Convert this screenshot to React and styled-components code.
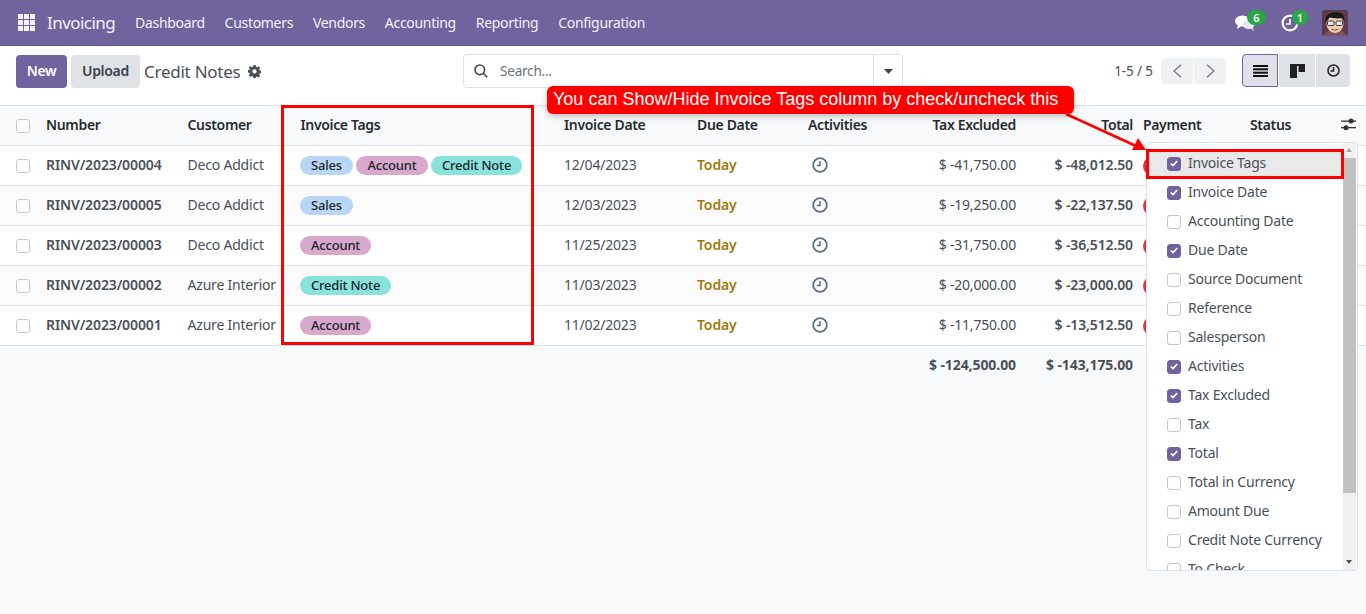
import React from "react";
import styled, { createGlobalStyle } from "styled-components";

const Global = createGlobalStyle`
  html, body { margin: 0; padding: 0; }
  body { font-family: "Noto Sans", "Open Sans", sans-serif; font-size: 14px; background: #f9fafb; color: #4a5058; }
  * { box-sizing: border-box; }
`;

const Page = styled.div`
  position: relative;
  width: 1366px;
  height: 614px;
  overflow: hidden;
  background: #f8f9fb;
`;

const Nav = styled.header`
  height: 46px;
  background: #71639e;
  border-bottom: 1px solid #5f5488;
  display: flex;
  align-items: center;
  padding: 0 18px;
  color: #f3f1f7;
`;
const Brand = styled.span`
  font-size: 17px;
  margin: 0 20px 0 12px;
  width: 68px;
  letter-spacing: -0.55px;
  white-space: nowrap;
`;
const Menu = styled.nav`
  display: flex;
  gap: 19.8px;
  font-size: 14px;
  letter-spacing: -0.3px;
`;
const NavRight = styled.div`
  margin-left: auto;
  display: flex;
  align-items: center;
`;
const Systray = styled.span`
  position: relative;
  display: flex;
  width: ${p => p.$w}px;
  height: 26px;
  align-items: center;
`;
const Badge = styled.span`
  position: absolute;
  left: ${p => p.$left}px;
  top: 0;
  width: ${p => p.$width}px;
  height: 15px;
  border-radius: 8px;
  background: #28a745;
  color: #fff;
  font-size: 11px;
  font-weight: 600;
  line-height: 15px;
  text-align: center;
`;

const Panel = styled.section`
  height: 59px;
  padding: 8px 16px 0;
  display: grid;
  grid-template-columns: 1fr 440px 1fr;
  align-items: start;
  background: #fff;
`;
const PanelLeft = styled.div`
  display: flex;
  align-items: center;
  margin-top: 1px;
`;
const Btn = styled.button`
  height: 33px;
  width: ${p => p.$w}px;
  margin-right: 4px;
  border: 0;
  border-radius: 4px;
  padding: 0 0 2px;
  font: 600 14px "Noto Sans", sans-serif;
  letter-spacing: -0.3px;
  background: ${p => (p.$primary ? "#71639e" : "#e0e2e6")};
  color: ${p => (p.$primary ? "#fff" : "#374151")};
`;
const Title = styled.span`
  font-size: 17px;
  color: #4a5058;
  margin-right: 8px;
  letter-spacing: -0.25px;
`;
const Search = styled.div`
  height: 34px;
  border: 1px solid #dee2e6;
  border-radius: 4px;
  display: flex;
  align-items: center;
  background: #fff;
`;
const SearchInput = styled.div`
  flex: 1;
  display: flex;
  align-items: center;
  gap: 12px;
  padding-left: 10px;
  font-size: 13.5px;
  color: #6b7280;
  letter-spacing: -0.2px;
`;
const SearchCaret = styled.div`
  width: 29px;
  height: 100%;
  border-left: 1px solid #dee2e6;
  display: flex;
  align-items: center;
  justify-content: center;
`;
const PanelRight = styled.div`
  display: flex;
  justify-content: flex-end;
  align-items: center;
  height: 33px;
`;
const PagerText = styled.span`
  font-size: 13.5px;
  margin-right: 8px;
  letter-spacing: -0.1px;
`;
const PagerGroup = styled.div`
  display: flex;
  gap: 1px;
  margin-right: 16px;
`;
const PagerBtn = styled.span`
  width: 32px;
  height: 26px;
  background: #f0f1f3;
  display: flex;
  align-items: center;
  justify-content: center;
  border-radius: ${p => (p.$first ? "4px 0 0 4px" : "0 4px 4px 0")};
`;
const ViewGroup = styled.div`
  display: flex;
  gap: 1px;
`;
const ViewBtn = styled.span`
  width: ${p => p.$w}px;
  height: 33px;
  display: flex;
  align-items: center;
  justify-content: center;
  background: ${p => (p.$active ? "#e1dfeb" : "#dee2e6")};
  border: ${p => (p.$active ? "1px solid #71639e" : "0")};
  border-radius: ${p => p.$radius};
`;

const Table = styled.table`
  width: 1366px;
  table-layout: fixed;
  border-collapse: collapse;
  font-size: 14px;
  letter-spacing: -0.2px;
`;
const Th = styled.th`
  height: 40px;
  padding: 0 ${p => p.$pr ?? 8}px ${p => p.$pb ?? 2}px ${p => p.$pl ?? 8}px;
  background: #f8f9fa;
  color: #262b31;
  font-weight: 600;
  letter-spacing: -0.34px;
  text-align: ${p => p.$align || "left"};
  border-top: 1px solid #dee2e6;
  border-bottom: 1px solid #dee2e6;
  white-space: nowrap;
`;
const Tr = styled.tr`
  background: ${p => (p.$odd ? "#fbfbfb" : "#fff")};
`;
const Td = styled.td`
  height: 40px;
  padding: 0 ${p => p.$pr ?? 8}px ${p => p.$pb ?? 2}px ${p => p.$pl ?? 8}px;
  border-bottom: 1px solid #dee2e6;
  text-align: ${p => p.$align || "left"};
  white-space: nowrap;
  overflow: hidden;
  font-weight: ${p => (p.$bold ? 600 : 400)};
  letter-spacing: ${p => (p.$bold ? "-0.12px" : "inherit")};
  color: ${p => p.$color || "#4a5058"};
`;
const FootTd = styled.td`
  height: 40px;
  padding: 0 ${p => p.$pr ?? 8}px 2px 8px;
  text-align: right;
  font-weight: 700;
  letter-spacing: -0.08px;
  color: #4a5058;
  white-space: nowrap;
`;
const Check = styled.span`
  display: flex;
  align-items: center;
  justify-content: center;
  width: 14px;
  height: 14px;
  border-radius: 3px;
  background: ${p => (p.$on ? "#71639e" : "#fff")};
  border: 1px solid ${p => (p.$on ? "#71639e" : "#c4c7cc")};
  flex: none;
`;
const Tags = styled.div`
  display: flex;
  gap: 3.5px;
`;
const Tag = styled.span`
  height: 19px;
  line-height: 19px;
  padding: 0 11px;
  border-radius: 10px;
  font-size: 13px;
  font-weight: 500;
  letter-spacing: -0.2px;
  color: #20262e;
  background: ${p => p.$bg};
`;
const PayDot = styled.span`
  display: block;
  width: 60px;
  height: 20px;
  border-radius: 10px;
  background: #dc3545;
`;

const Dropdown = styled.div`
  position: absolute;
  left: 1146px;
  top: 142px;
  width: 212px;
  height: 429px;
  background: #fff;
  border: 1px solid #dee2e6;
  border-radius: 4px;
  overflow: hidden;
  padding-top: 6px;
`;
const Item = styled.div`
  height: 29px;
  width: 196px;
  display: flex;
  align-items: center;
  gap: 7px;
  padding-left: 20px;
  font-size: 14px;
  letter-spacing: -0.22px;
  color: #4a5058;
  background: ${p => (p.$hover ? "#e9e9e9" : "transparent")};
`;
const ItemLabel = styled.span`
  margin-bottom: 2px;
`;
const Scrollbar = styled.div`
  position: absolute;
  right: 1px;
  top: 0;
  bottom: 0;
  width: 13px;
  background: #f1f1f1;
`;
const Thumb = styled.div`
  position: absolute;
  top: 15px;
  left: 0;
  width: 13px;
  height: 335px;
  background: #c1c1c1;
`;
const ScrollArrow = styled.span`
  position: absolute;
  ${p => (p.$down ? "bottom: 6px" : "top: 5px")};
  left: 3px;
  width: 0;
  height: 0;
  border-left: 3.5px solid transparent;
  border-right: 3.5px solid transparent;
  ${p => (p.$down ? "border-top: 4px solid #505050" : "border-bottom: 4px solid #a3a3a3")};
`;
const RedBox = styled.div`
  position: absolute;
  left: ${p => p.$x}px;
  top: ${p => p.$y}px;
  width: ${p => p.$w}px;
  height: ${p => p.$h}px;
  border: 3px solid #ff0000;
  pointer-events: none;
`;
const Callout = styled.div`
  position: absolute;
  left: 547px;
  top: 86px;
  width: 527px;
  height: 28px;
  padding-left: 6px;
  background: #ff0000;
  border-radius: 6px;
  box-shadow: 0 2px 6px rgba(0, 0, 0, 0.25);
  color: #fff;
  font: 18px/27px "Liberation Sans", Arial, sans-serif;
  white-space: nowrap;
`;
const ArrowSvg = styled.svg`
  position: absolute;
  left: 1060px;
  top: 108px;
`;
const OptionsIcon = styled.svg`
  position: absolute;
  left: 1341px;
  top: 118px;
`;
const ActivitySvg = styled.svg`
  display: block;
`;

const Grid = () => (
  <svg width="17" height="17" viewBox="0 0 17 17" fill="#f4f2f8">
    {[0, 6, 12].flatMap(x => [0, 6, 12].map(y => <rect key={x + "-" + y} x={x} y={y} width="5" height="5" />))}
  </svg>
);
const Chat = () => (
  <svg width="20" height="18" viewBox="0 0 20 18" fill="#fff">
    <ellipse cx="7.5" cy="7" rx="7.5" ry="5.5" />
    <path d="M3 10 L2 15 L8 11z" />
    <ellipse cx="13.5" cy="10.5" rx="6" ry="4.5" fill="#e9e6f2" />
    <path d="M14 13 L19 17 L17 12z" fill="#e9e6f2" />
  </svg>
);
const NavClock = () => (
  <svg width="18" height="18" viewBox="0 0 18 18" fill="none" stroke="#fff" strokeWidth="2.2">
    <circle cx="9" cy="9" r="7.4" />
    <path d="M9 5v5H5" strokeWidth="1.6" />
  </svg>
);
const Avatar = () => (
  <svg width="26" height="26" viewBox="0 0 26 26">
    <rect width="26" height="26" rx="3" fill="#5a3a4c" />
    <path d="M2 26c1-5 5-6 11-6s10 1 11 6z" fill="#7d5060" />
    <ellipse cx="13" cy="14" rx="8.5" ry="9" fill="#f1cdb5" />
    <path d="M3.500 12C2 5 9 1.500 14 2c5.500 0 9 3 8.500 9.500l-2-3.500C15 9 10 8 7.500 7.500 6.500 9 5.500 11 3.500 12z" fill="#1d1a1c" />
    <rect x="5.500" y="11" width="6.500" height="4.500" rx="1" fill="#e8e6e0" stroke="#3a3a3a" />
    <rect x="14" y="11" width="6.500" height="4.500" rx="1" fill="#e8e6e0" stroke="#3a3a3a" />
    <path d="M9.500 19c2.500 1.500 5 1.500 7 0" stroke="#8a4a3c" fill="none" />
  </svg>
);
const Gear = () => (
  <svg width="13" height="13" viewBox="0 0 13 13" fill="#4a5058">
    <path fillRule="evenodd" d="M5.3 0h2.4l.3 1.8 1 .4L10.500 1.200l1.700 1.700-1 1.500.4 1 1.900.3v2.400l-1.900.3-.4 1 1 1.500-1.700 1.700-1.500-1-1 .4-.3 1.900H5.300L5 11.400l-1-.4-1.500 1L.8 10.300l1-1.500-.4-1L0 7.500V5.100l1.400-.3.4-1-1-1.900L2.500 1.200 4 2.200l1-.4zM6.500 4.300a2.100 2.100 0 1 0 0 4.300 2.100 2.100 0 0 0 0-4.300z" />
  </svg>
);
const Magnifier = () => (
  <svg width="14" height="14" viewBox="0 0 14 14" fill="none" stroke="#3f4650" strokeWidth="1.6">
    <circle cx="5.8" cy="5.800" r="4.800" />
    <path d="M9.300 9.300 13.300 13.300" />
  </svg>
);
const Caret = () => (
  <svg width="9" height="5" viewBox="0 0 9 5" fill="#3f4650"><path d="M0 0h9L4.500 5z" /></svg>
);
const Chevron = ({ right }) => (
  <svg width="9" height="14" viewBox="0 0 9 14" fill="none" stroke="#6b7280" strokeWidth="1.200">
    <path d={right ? "M1 .7 8 7 1 13.300" : "M8 .7 1 7 8 13.300"} />
  </svg>
);
const ListIcon = () => (
  <svg width="15" height="12" viewBox="0 0 15 12" fill="#111">
    <rect y="0" width="15" height="2" /><rect y="3.300" width="15" height="2" /><rect y="6.700" width="15" height="2" /><rect y="10" width="15" height="2" />
  </svg>
);
const KanbanIcon = () => (
  <svg width="15" height="14" viewBox="0 0 15 14" fill="#222">
    <rect width="15" height="2" /><rect y="2" width="7" height="12" /><rect x="8.500" y="2" width="6.500" height="6" />
  </svg>
);
const SmallClock = () => (
  <svg width="13" height="13" viewBox="0 0 13 13" fill="none" stroke="#222" strokeWidth="1.500">
    <circle cx="6.500" cy="6.500" r="5.500" /><path d="M6.500 3v4H3.500" />
  </svg>
);
const ActivityClock = () => (
  <ActivitySvg width="16" height="16" viewBox="0 0 16 16" fill="none" stroke="#5f6e80" strokeWidth="1.800">
    <circle cx="8" cy="8" r="6.800" /><path d="M8 4v4.500H4.800" strokeWidth="1.500" />
  </ActivitySvg>
);
const Tick = () => (
  <svg width="8" height="7" viewBox="0 0 8 7" fill="none" stroke="#fff" strokeWidth="1.700"><path d="M.8 3.500 3 5.600 7.200 1" /></svg>
);

const tagColors = { Sales: "#bad6f7", Account: "#d9a9cd", "Credit Note": "#8ae3da" };
const rows = [
  ["RINV/2023/00004", "Deco Addict", ["Sales", "Account", "Credit Note"], "12/04/2023", "$ -41,750.00", "$ -48,012.50"],
  ["RINV/2023/00005", "Deco Addict", ["Sales"], "12/03/2023", "$ -19,250.00", "$ -22,137.50"],
  ["RINV/2023/00003", "Deco Addict", ["Account"], "11/25/2023", "$ -31,750.00", "$ -36,512.50"],
  ["RINV/2023/00002", "Azure Interior", ["Credit Note"], "11/03/2023", "$ -20,000.00", "$ -23,000.00"],
  ["RINV/2023/00001", "Azure Interior", ["Account"], "11/02/2023", "$ -11,750.00", "$ -13,512.50"],
];
const options = [
  ["Invoice Tags", true], ["Invoice Date", true], ["Accounting Date", false], ["Due Date", true],
  ["Source Document", false], ["Reference", false], ["Salesperson", false], ["Activities", true],
  ["Tax Excluded", true], ["Tax", false], ["Total", true], ["Total in Currency", false],
  ["Amount Due", false], ["Credit Note Currency", false], ["To Check", false],
];
const widths = [38, 141, 113, 264, 133, 111, 105, 119, 111, 107, 90, 34];

export default function App() {
  return (
    <Page>
      <Global />
      <Nav>
        <Grid />
        <Brand>Invoicing</Brand>
        <Menu>
          {["Dashboard", "Customers", "Vendors", "Accounting", "Reporting", "Configuration"].map(m => <span key={m}>{m}</span>)}
        </Menu>
        <NavRight>
          <Systray $w={46}><Chat /><Badge $left={12} $width={19}>6</Badge></Systray>
          <Systray $w={41}><NavClock /><Badge $left={11} $width={16}>1</Badge></Systray>
          <Avatar />
        </NavRight>
      </Nav>
      <Panel>
        <PanelLeft>
          <Btn $primary $w={51}>New</Btn>
          <Btn $w={69}>Upload</Btn>
          <Title>Credit Notes</Title>
          <Gear />
        </PanelLeft>
        <Search>
          <SearchInput><Magnifier />Search...</SearchInput>
          <SearchCaret><Caret /></SearchCaret>
        </Search>
        <PanelRight>
          <PagerText>1-5 / 5</PagerText>
          <PagerGroup>
            <PagerBtn $first><Chevron /></PagerBtn>
            <PagerBtn><Chevron right /></PagerBtn>
          </PagerGroup>
          <ViewGroup>
            <ViewBtn $active $w={36} $radius="4px 0 0 4px"><ListIcon /></ViewBtn>
            <ViewBtn $w={36} $radius="0"><KanbanIcon /></ViewBtn>
            <ViewBtn $w={34} $radius="0 4px 4px 0"><SmallClock /></ViewBtn>
          </ViewGroup>
        </PanelRight>
      </Panel>
      <Table>
        <colgroup>{widths.map((w, i) => <col key={i} style={{ width: w }} />)}</colgroup>
        <thead>
          <tr>
            <Th $pl={16} $pr={0} $pb={0}><Check /></Th>
            <Th>Number</Th>
            <Th $pl={8.5}>Customer</Th>
            <Th $pl={8.5}>Invoice Tags</Th>
            <Th>Invoice Date</Th>
            <Th>Due Date</Th>
            <Th>Activities</Th>
            <Th $align="right">Tax Excluded</Th>
            <Th $align="right" $pr={2}>Total</Th>
            <Th>Payment</Th>
            <Th>Status</Th>
            <Th />
          </tr>
        </thead>
        <tbody>
          {rows.map((r, i) => (
            <Tr key={r[0]} $odd={i % 2 === 1}>
              <Td $pl={16} $pr={0} $pb={0}><Check /></Td>
              <Td $bold>{r[0]}</Td>
              <Td $pl={8.5}>{r[1]}</Td>
              <Td $pb={0}><Tags>{r[2].map(t => <Tag key={t} $bg={tagColors[t]}>{t}</Tag>)}</Tags></Td>
              <Td>{r[3]}</Td>
              <Td $bold $color="#a07a10">Today</Td>
              <Td $pl={12} $pb={1}><ActivityClock /></Td>
              <Td $align="right">{r[4]}</Td>
              <Td $align="right" $pr={2} $bold>{r[5]}</Td>
              <Td $pb={0}><PayDot /></Td>
              <Td />
              <Td />
            </Tr>
          ))}
        </tbody>
        <tfoot>
          <tr>
            <td colSpan={7} />
            <FootTd>$ -124,500.00</FootTd>
            <FootTd $pr={2}>$ -143,175.00</FootTd>
            <td colSpan={3} />
          </tr>
        </tfoot>
      </Table>
      <OptionsIcon width="15" height="13" viewBox="0 0 15 13" fill="#333">
        <rect y="2.500" width="15" height="1.300" /><rect y="9" width="15" height="1.300" />
        <circle cx="10" cy="3.100" r="2.500" /><circle cx="5" cy="9.700" r="2.500" />
      </OptionsIcon>
      <Dropdown>
        {options.map(([label, on], i) => (
          <Item key={label} $hover={i === 0}>
            <Check $on={on}>{on && <Tick />}</Check>
            <ItemLabel>{label}</ItemLabel>
          </Item>
        ))}
        <Scrollbar>
          <Thumb />
          <ScrollArrow />
          <ScrollArrow $down />
        </Scrollbar>
      </Dropdown>
      <RedBox $x={281} $y={105} $w={253} $h={240} />
      <RedBox $x={1146} $y={149} $w={198} $h={30} />
      <ArrowSvg width="95" height="50" viewBox="0 0 95 50">
        <path d="M6 6 76 38" stroke="#ff0000" strokeWidth="2.500" />
        <path d="M86 42 72 42 78 30z" fill="#ff0000" />
      </ArrowSvg>
      <Callout>You can Show/Hide Invoice Tags column by check/uncheck this</Callout>
    </Page>
  );
}
